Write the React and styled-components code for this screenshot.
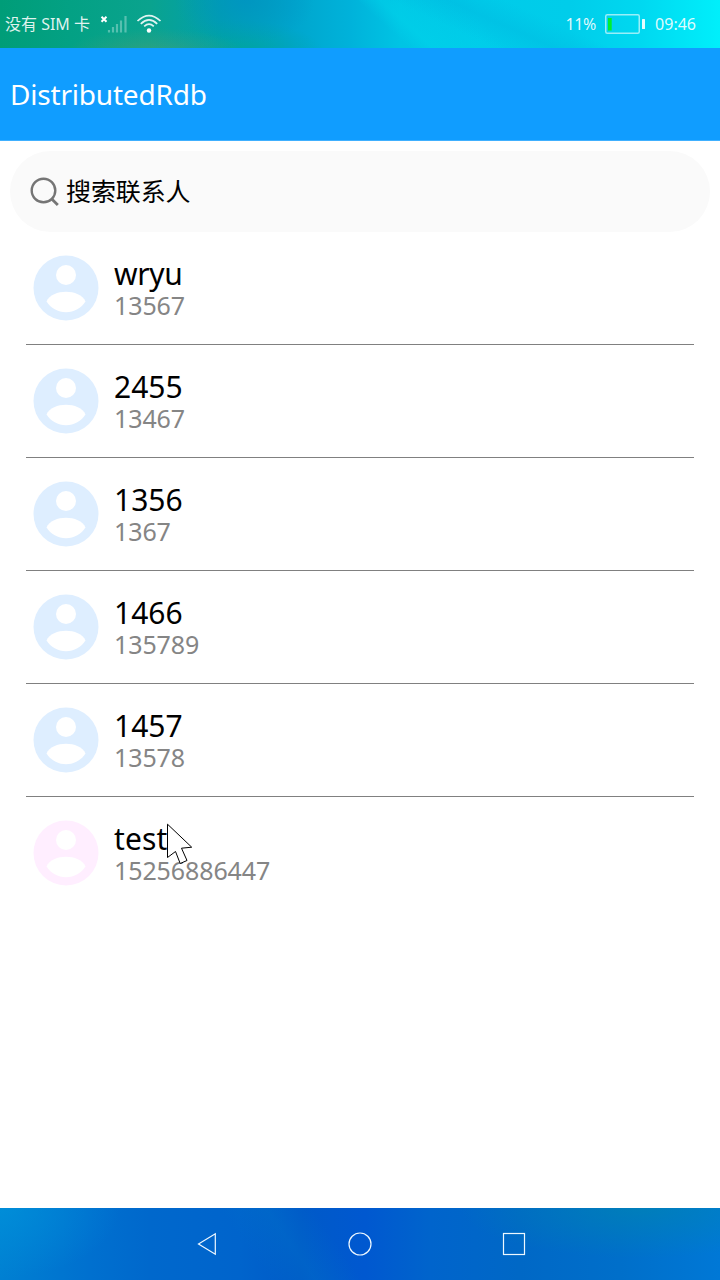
import React from "react";
import styled, { createGlobalStyle } from "styled-components";

const GlobalStyle = createGlobalStyle`
  * { box-sizing: border-box; }
  body {
    margin: 0;
    background: #fff;
    font-family: "Noto Sans", "Noto Sans CJK SC", sans-serif;
  }
`;

const Screen = styled.div`
  width: 720px;
  height: 1280px;
  display: flex;
  flex-direction: column;
  background: #fff;
  overflow: hidden;
  position: relative;
`;

const StatusBar = styled.header`
  height: 48px;
  flex: none;
  display: flex;
  align-items: center;
  justify-content: space-between;
  padding: 0 24px 0 5px;
  color: rgba(255, 255, 255, 0.88);
  background:
    radial-gradient(ellipse 90px 26px at 155px 54px, rgba(70, 160, 120, 0.6), transparent),
    radial-gradient(ellipse 70px 44px at 245px 0, rgba(0, 145, 195, 0.7), transparent),
    radial-gradient(ellipse 90px 34px at 235px 54px, rgba(0, 165, 150, 0.7), transparent),
    linear-gradient(24deg, transparent 60%, rgba(0, 175, 220, 0.3) 67%, transparent 74%),
    linear-gradient(42deg, transparent 53%, rgba(0, 220, 238, 0.35) 56%, transparent 66%),
    linear-gradient(90deg, #009d78 0, #03a184 70px, #0aa38e 150px, #00a0b0 220px, #00a5cc 290px, #00b2da 350px, #00c4e4 400px, #00cbe9 480px, #00cdea 570px, #00d8f0 640px, #00effb 720px);
`;

const StatusGroup = styled.div`
  display: flex;
  align-items: center;
`;

const StatusText = styled.span`
  font-size: 16px;
  line-height: 24px;
  letter-spacing: ${(p) => p.$spacing || "0"};
  white-space: pre;
`;

const SignalIcon = styled.svg`
  margin-left: 10px;
`;

const WifiIcon = styled.svg`
  margin-left: 8px;
`;

const BatteryIcon = styled.svg`
  margin: 0 9px;
`;

const TitleBar = styled.div`
  height: 93px;
  flex: none;
  display: flex;
  align-items: center;
  padding: 0 0 1px 10px;
  color: #fff;
  background: #109dff;
  border-bottom: 1px solid #40b0ff;
`;

const Title = styled.h1`
  margin: 0;
  font-size: 28px;
  line-height: 40px;
  font-weight: 400;
  letter-spacing: -0.2px;
`;

const SearchBox = styled.div`
  flex: none;
  margin: 10px 10px 0;
  height: 81px;
  border-radius: 41px;
  background: #fafafa;
  display: flex;
  align-items: center;
  padding-left: 20px;
`;

const SearchLabel = styled.span`
  margin-left: 6px;
  padding-bottom: 2px;
  font-size: 25px;
  line-height: 36px;
  letter-spacing: -0.1px;
  color: #000;
`;

const ContactList = styled.ul`
  list-style: none;
  margin: 0;
  padding: 0 26px;
  flex: 1;
`;

const ContactRow = styled.li`
  height: 113px;
  display: flex;
  align-items: center;
  padding-left: 7px;
  border-bottom: 1px solid #808080;
  &:last-child {
    border-bottom-color: transparent;
  }
`;

const ContactText = styled.div`
  margin-left: 15px;
  padding-top: 1px;
  display: flex;
  flex-direction: column;
`;

const ContactName = styled.span`
  font-size: 30px;
  line-height: 32px;
  letter-spacing: ${(p) => p.$spacing || "0"};
  color: #000;
`;

const ContactPhone = styled.span`
  font-size: 25px;
  line-height: 30px;
  letter-spacing: -0.1px;
  color: #858585;
`;

const NavBar = styled.nav`
  height: 72px;
  flex: none;
  display: flex;
  align-items: center;
  justify-content: center;
  gap: 130px;
  background:
    radial-gradient(ellipse 120px 70px at 0 0, rgba(0, 150, 220, 0.6), transparent),
    linear-gradient(55deg, transparent 35%, rgba(0, 115, 200, 0.35) 41%, transparent 47%),
    radial-gradient(ellipse 180px 50px at 640px 0, rgba(0, 135, 175, 0.6), transparent),
    linear-gradient(90deg, #0080d2 0, #0070cf 90px, #0068cc 150px, #0064cc 240px, #005ac8 300px, #0058d0 365px, #0064cc 430px, #0068c6 520px, #006fca 620px, #0078d6 720px);
`;

const NavIcon = styled.svg`
  fill: none;
  stroke: #eef8ff;
  stroke-width: 1.2;
`;

const Pointer = styled.svg`
  position: absolute;
  left: 166px;
  top: 823px;
`;

const contacts = [
  { name: "wryu", phone: "13567", color: "#deeeff", spacing: "-0.3px" },
  { name: "2455", phone: "13467", color: "#deeeff" },
  { name: "1356", phone: "1367", color: "#deeeff" },
  { name: "1466", phone: "135789", color: "#deeeff" },
  { name: "1457", phone: "13578", color: "#deeeff" },
  { name: "test", phone: "15256886447", color: "#ffeeff", spacing: "0.1px" },
];

function Avatar({ color }) {
  return (
    <svg width="66" height="66" viewBox="0 0 66 66">
      <circle cx="33" cy="33" r="32.5" fill={color} />
      <circle cx="33" cy="20" r="10" fill="#fff" />
      <path d="M13.500 46.500C16 40 25 36.800 33 36.800s17 3.200 19.500 9.700C48.500 53 41 57.200 33 57.200S17.500 53 13.500 46.500Z" fill="#fff" />
    </svg>
  );
}

export default function App() {
  return (
    <Screen>
      <GlobalStyle />
      <StatusBar>
        <StatusGroup>
          <StatusText>没有 SIM 卡</StatusText>
          <SignalIcon width="28" height="20" viewBox="0 0 28 20">
            <path d="M1.500 2.800l5 5M6.500 2.800l-5 5" stroke="#fff" strokeWidth="2" />
            <path d="M9 16v2.500M13 13v5.500M17 10v8.500M21 6.500v12M25.500 2v16.500" stroke="#fff" strokeOpacity=".32" strokeWidth="2.200" />
          </SignalIcon>
          <WifiIcon width="26" height="20" viewBox="0 0 26 20" fill="none" stroke="#fff" strokeOpacity=".88" strokeWidth="1.700">
            <path d="M1.500 7Q13-3.800 24.500 7M4.800 9.800Q13 2 21.200 9.800M8.200 12.400Q13 8 17.800 12.400" />
            <circle cx="13" cy="16.500" r="2.200" fill="#fff" stroke="none" />
          </WifiIcon>
        </StatusGroup>
        <StatusGroup>
          <StatusText $spacing="-0.3px">11%</StatusText>
          <BatteryIcon width="41" height="20" viewBox="0 0 41 20">
            <rect x=".75" y=".75" width="33.500" height="18.500" rx="1.500" fill="none" stroke="#fff" strokeOpacity=".6" strokeWidth="1.500" />
            <rect x="3" y="4" width="3.700" height="12.500" fill="#00f02c" />
            <rect x="37" y="5" width="3" height="10" rx=".5" fill="#fff" fillOpacity=".9" />
          </BatteryIcon>
          <StatusText>09:46</StatusText>
        </StatusGroup>
      </StatusBar>
      <TitleBar>
        <Title>DistributedRdb</Title>
      </TitleBar>
      <SearchBox>
        <svg width="30" height="30" viewBox="0 0 30 30" fill="none" stroke="#757575" strokeWidth="2.400">
          <circle cx="13.500" cy="13.500" r="11.800" />
          <path d="M21.500 21.800l6.300 6.300" strokeWidth="2.800" />
        </svg>
        <SearchLabel>搜索联系人</SearchLabel>
      </SearchBox>
      <ContactList>
        {contacts.map((c) => (
          <ContactRow key={c.name}>
            <Avatar color={c.color} />
            <ContactText>
              <ContactName $spacing={c.spacing}>{c.name}</ContactName>
              <ContactPhone>{c.phone}</ContactPhone>
            </ContactText>
          </ContactRow>
        ))}
      </ContactList>
      <NavBar>
        <NavIcon width="24" height="24" viewBox="0 0 24 24">
          <path d="M4.500 12L21.300 1.800v20.400Z" />
        </NavIcon>
        <NavIcon width="24" height="24" viewBox="0 0 24 24">
          <circle cx="12" cy="12" r="11" />
        </NavIcon>
        <NavIcon width="24" height="24" viewBox="0 0 24 24">
          <rect x="1.500" y="1.500" width="21" height="21" />
        </NavIcon>
      </NavBar>
      <Pointer width="28" height="42" viewBox="0 0 28 42">
        <path d="M1.500 1.200V34.500L9.500 28.500L14.200 40.500L21 37.500L15.500 25.200L25.700 24.200Z" fill="#fff" stroke="#000" strokeWidth="1" />
      </Pointer>
    </Screen>
  );
}
